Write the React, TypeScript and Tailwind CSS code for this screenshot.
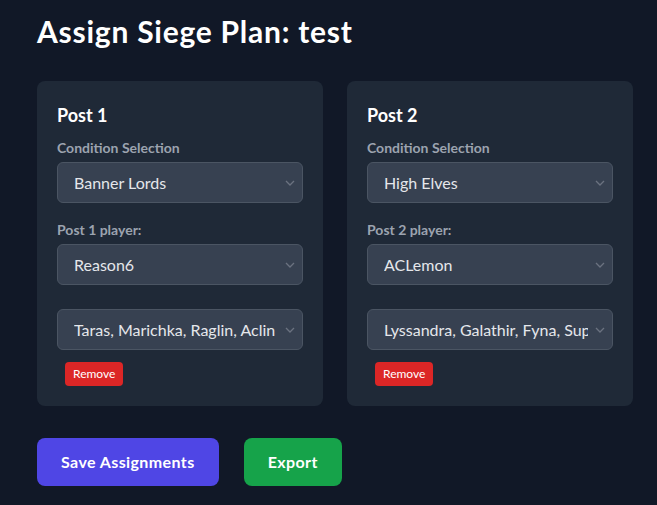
import React from "react";

const posts = [
  {
    title: "Post 1",
    condition: "Banner Lords",
    player: "Reason6",
    champions: "Taras, Marichka, Raglin, Aclin",
  },
  {
    title: "Post 2",
    condition: "High Elves",
    player: "ACLemon",
    champions: "Lyssandra, Galathir, Fyna, Supreme Galek",
  },
];

const FakeSelect = ({ value }: { value: string }) => (
  <div className="relative h-[41px] w-full rounded-md border border-[#4b5563] bg-[#374151] pl-4 pr-[24px] text-base text-[#e5e7eb]">
    <div className="h-full overflow-hidden whitespace-nowrap leading-[39px]">{value}</div>
    <svg
      className="absolute right-[7px] top-[17px] h-[6px] w-[10px] text-[#6b7280]"
      viewBox="0 0 10 6"
      fill="none"
      stroke="currentColor"
      strokeWidth="1.3"
    >
      <path d="M1 1l4 4 4-4" />
    </svg>
  </div>
);

export default function App() {
  return (
    <div className="min-h-screen bg-[#111827] pl-[37px] pr-6 pt-[13px] font-['Lato',sans-serif] text-white">
      <h1 className="mb-8 text-3xl font-bold leading-9 tracking-[0.025em]">Assign Siege Plan: test</h1>

      <div className="grid grid-cols-2 gap-6">
        {posts.map((p) => (
          <div key={p.title} className="rounded-lg bg-[#1f2937] p-5">
            <h2 className="mb-[9px] text-lg font-bold leading-7">{p.title}</h2>
            <label className="mb-1 block text-sm font-bold leading-5 text-[#9ca3af]">Condition Selection</label>
            <FakeSelect value={p.condition} />
            <label className="mb-1 mt-[17px] block text-sm font-bold leading-5 text-[#9ca3af]">{p.title} player:</label>
            <FakeSelect value={p.player} />
            <div className="mt-6">
              <FakeSelect value={p.champions} />
            </div>
            <button className="ml-2 mt-3 h-6 rounded bg-[#dc2626] px-2 text-xs text-white">Remove</button>
          </div>
        ))}
      </div>

      <div className="mt-8 flex gap-[25px]">
        <button className="h-12 rounded-lg bg-[#4f46e5] px-6 text-base font-bold tracking-[0.025em] text-white">
          Save Assignments
        </button>
        <button className="h-12 rounded-lg bg-[#16a34a] px-6 text-base font-bold tracking-[0.025em] text-white">
          Export
        </button>
      </div>
    </div>
  );
}
